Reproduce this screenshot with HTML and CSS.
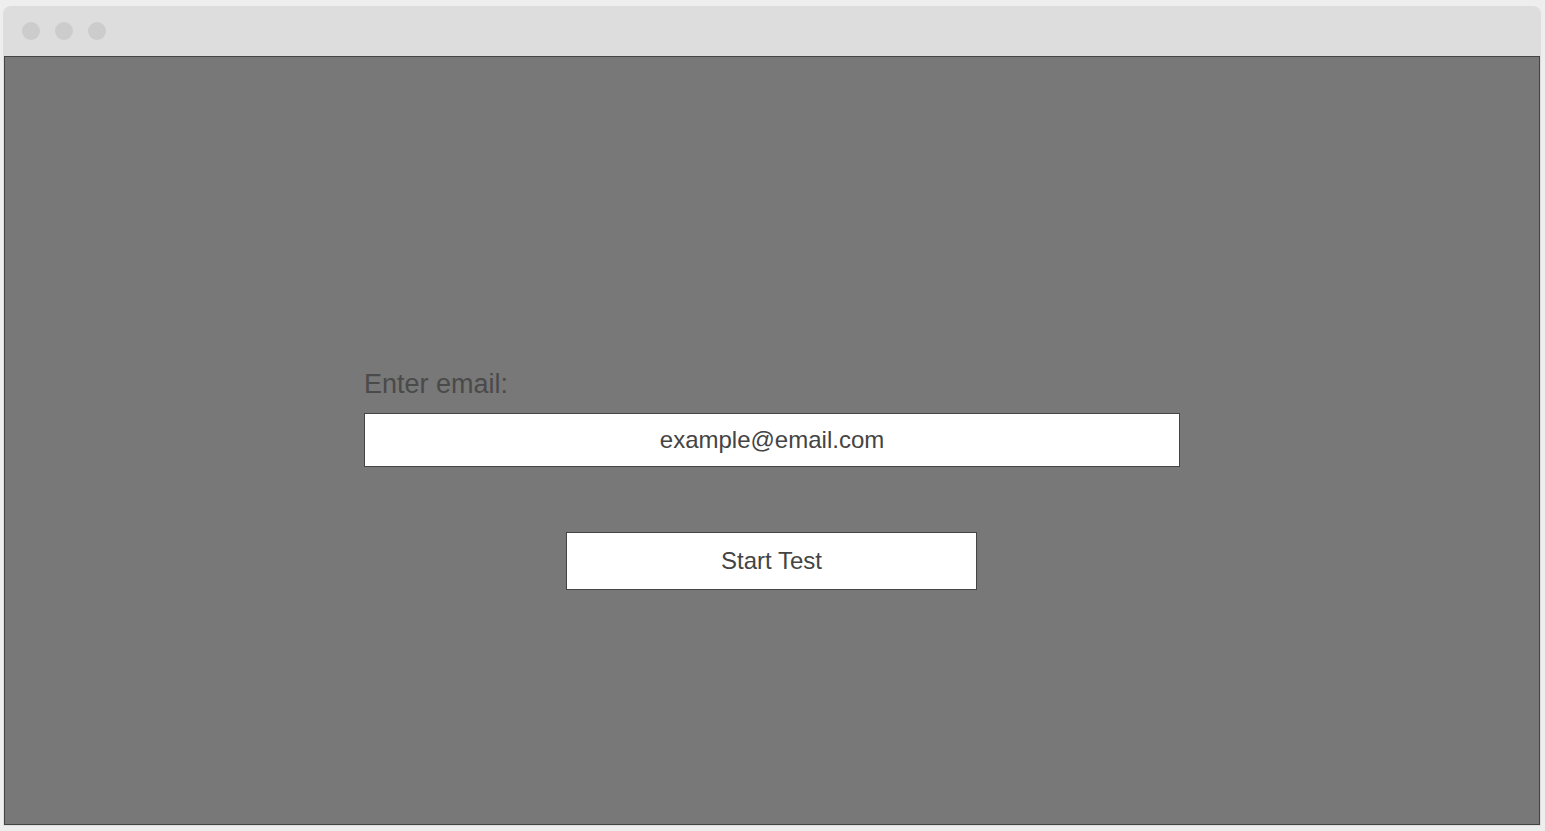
FILE: index.html
```html
<!DOCTYPE html>
<html>
<head>
<meta charset="utf-8">
<link rel="stylesheet" href="styles.css">
</head>
<body>
<div class="window">
  <div class="titlebar">
    <span class="dot"></span>
    <span class="dot"></span>
    <span class="dot"></span>
  </div>
  <div class="content">
    <div class="form">
      <label class="label">Enter email:</label>
      <div class="input">example@email.com</div>
      <div class="button">Start Test</div>
    </div>
  </div>
</div>
</body>
</html>
```

FILE: styles.css
```css
html, body {
  margin: 0;
  padding: 0;
}
body {
  background: #eeeeee;
  padding: 6px 4px 5px 3px;
  font-family: "Liberation Sans", Arial, sans-serif;
}
.window {
  width: 1538px;
  background: #dddddd;
  border-radius: 8px 8px 0 0;
  padding: 0 1px 1px 1px;
  box-sizing: border-box;
}
.titlebar {
  height: 50px;
  display: flex;
  align-items: center;
  gap: 15px;
  padding-left: 18px;
}
.dot {
  width: 18px;
  height: 18px;
  border-radius: 50%;
  background: #cccccc;
}
.content {
  height: 769px;
  box-sizing: border-box;
  border: 1px solid #444444;
  background: #787878;
  display: flex;
  flex-direction: column;
  align-items: center;
  padding-top: 312px;
}
.form {
  width: 816px;
  display: flex;
  flex-direction: column;
  align-items: flex-start;
}
.label {
  font-size: 27px;
  line-height: 31px;
  color: #4a4a4a;
  margin-bottom: 13px;
}
.input {
  width: 100%;
  height: 54px;
  box-sizing: border-box;
  border: 1px solid #444444;
  background: #ffffff;
  color: #444444;
  font-size: 24px;
  display: flex;
  align-items: center;
  justify-content: center;
}
.button {
  margin-top: 65px;
  margin-left: 202px;
  width: 411px;
  height: 58px;
  box-sizing: border-box;
  border: 1px solid #444444;
  background: #ffffff;
  color: #444444;
  font-size: 24px;
  display: flex;
  align-items: center;
  justify-content: center;
}
```
